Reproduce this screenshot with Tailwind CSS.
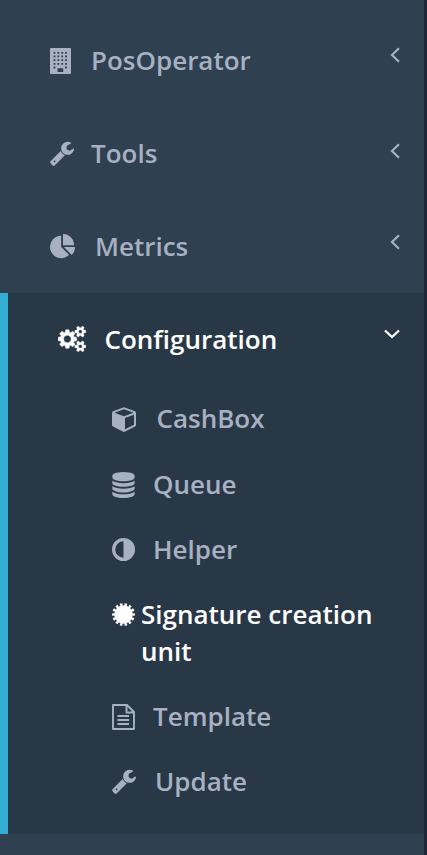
<!DOCTYPE html>
<html lang="en">
<head>
<meta charset="utf-8">
<title>Navigation</title>
<script src="https://cdn.jsdelivr.net/npm/@tailwindcss/browser@4"></script>
</head>
<body class="bg-[#2f4050]">
<nav class="w-[427px] h-[855px] overflow-hidden border-r-3 border-[#1d2735] bg-[#2f4050] pt-[14px] font-['Open_Sans',sans-serif] text-[26px] leading-[37px] font-semibold text-[#a7b1c2]">
  <ul>
    <li class="flex h-[93px] items-center pl-[50px] pr-[24px]">
      <svg class="w-[21px] h-[26px] shrink-0" viewBox="0 0 21 26" fill="currentColor"><path fill-rule="evenodd" d="M1 0H20Q21 0 21 1V25Q21 26 20 26H1Q0 26 0 25V1Q0 0 1 0ZM7.500 20.300V24H13.200V20.300Z"/><path d="M4.500 3.900V20.500M8.300 3.900V17M12.200 3.900V17M16 3.900V20.500" stroke="#2f4050" stroke-width="1.800" stroke-dasharray="1.800 1.870"/></svg>
      <span class="ml-[20px]">PosOperator</span>
      <svg class="ml-auto mb-3 w-[10px] h-[16px]" viewBox="0 0 10 16" fill="none" stroke="currentColor" stroke-width="2.200"><path d="M9 1.300L2 8L9 14.700"/></svg>
    </li>
    <li class="flex h-[93px] items-center pl-[49px] pr-[24px]">
      <svg class="mb-px w-[26px] h-[26px] shrink-0" viewBox="0 0 1792 1792" fill="currentColor"><path id="wrench" d="M448 1472q0-26-19-45t-45-19-45 19-19 45 19 45 45 19 45-19 19-45zm644-420l-682 682q-37 37-90 37-52 0-91-37l-106-108q-38-36-38-90 0-53 38-91l681-681q39 98 114.500 173.500t173.500 114.500zm634-435q0 39-23 106-47 134-164.500 217.500t-258.500 83.500q-185 0-316.500-131.500t-131.500-316.500 131.500-316.500 316.500-131.500q58 0 121.500 16.500t107.500 46.500q16 11 16 28t-16 28l-293 169v224l193 107q5-3 79-48.500t135.500-81 70.500-35.500q15 0 23.500 10t8.500 25z"/></svg>
      <span class="ml-[16px]">Tools</span>
      <svg class="ml-auto mb-1.5 w-[10px] h-[16px]" viewBox="0 0 10 16" fill="none" stroke="currentColor" stroke-width="2.200"><path d="M9 1.300L2 8L9 14.700"/></svg>
    </li>
    <li class="flex h-[93px] items-center pl-[50px] pr-[24px]">
      <svg class="w-[26px] h-[26px] shrink-0" viewBox="0 0 1792 1792" fill="currentColor"><path d="M768 890l546 546q-106 108-247.500 168t-298.500 60q-209 0-385.500-103t-279.500-279.500-103-385.500 103-385.500 279.500-279.500 385.500-103v762zm187 6h773q0 157-60 298.500t-168 247.500zm709-128h-768v-768q209 0 385.500 103t279.500 279.500 103 385.500z"/></svg>
      <span class="ml-[19px]">Metrics</span>
      <svg class="ml-auto mb-2.5 w-[10px] h-[16px]" viewBox="0 0 10 16" fill="none" stroke="currentColor" stroke-width="2.200"><path d="M9 1.300L2 8L9 14.700"/></svg>
    </li>
    <li class="h-[541px] border-l-8 border-[#33aed3] bg-[#293846]">
      <div class="flex h-[93px] items-center pl-[50px] pr-[24px] text-white">
        <svg class="mb-px w-[28px] h-[26px] shrink-0" viewBox="0 0 1920 1792" fill="currentColor" stroke="currentColor" stroke-width="30"><path d="M896 896q0-106-75-181t-181-75-181 75-75 181 75 181 181 75 181-75 75-181zm768 512q0-52-38-90t-90-38-90 38-38 90q0 53 37.500 90.500t90.500 37.500 90.500-37.500 37.500-90.500zm0-1024q0-52-38-90t-90-38-90 38-38 90q0 53 37.500 90.500t90.500 37.500 90.500-37.500 37.500-90.500zm-384 421v185q0 10-7 19.500t-16 10.500l-155 24q-11 35-32 76 34 48 90 115 7 11 7 20 0 12-7 19-23 30-82.500 89.500t-78.500 59.500q-11 0-21-7l-115-90q-37 19-77 31-11 108-23 155-7 24-30 24h-186q-11 0-20-7.500t-10-17.500l-23-153q-34-10-75-31l-118 89q-7 7-20 7-11 0-21-8-144-133-144-160 0-9 7-19 10-14 41-53t47-61q-23-44-35-82l-152-24q-10-1-17-9.500t-7-19.500v-185q0-10 7-19.500t16-10.500l155-24q11-35 32-76-34-48-90-115-7-11-7-20 0-12 7-20 22-30 82-89t79-59q11 0 21 7l115 90q34-18 77-32 11-108 23-154 7-24 30-24h186q11 0 20 7.500t10 17.500l23 153q34 10 75 31l118-89q8-7 20-7 11 0 21 8 144 133 144 160 0 8-7 19-12 16-42 54t-45 60q23 48 34 82l152 23q10 2 17 10.500t7 19.500zm640 533v140q0 16-149 31-12 27-30 52 51 113 51 138 0 4-4 7-122 71-124 71-8 0-46-47t-52-68q-20 2-30 2t-30-2q-14 21-52 68t-46 47q-2 0-124-71-4-3-4-7 0-25 51-138-18-25-30-52-149-15-149-31v-140q0-16 149-31 13-29 30-52-51-113-51-138 0-4 4-7 4-2 35-20t59-34 30-16q8 0 46 46.500t52 67.500q20-2 30-2t30 2q51-71 92-112l6-2q4 0 124 70 4 3 4 7 0 25-51 138 17 23 30 52 149 15 149 31zm0-1024v140q0 16-149 31-12 27-30 52 51 113 51 138 0 4-4 7-122 71-124 71-8 0-46-47t-52-68q-20 2-30 2t-30-2q-14 21-52 68t-46 47q-2 0-124-71-4-3-4-7 0-25 51-138-18-25-30-52-149-15-149-31v-140q0-16 149-31 13-29 30-52-51-113-51-138 0-4 4-7 4-2 35-20t59-34 30-16q8 0 46 46.500t52 67.500q20-2 30-2t30 2q51-71 92-112l6-2q4 0 124 70 4 3 4 7 0 25-51 138 17 23 30 52 149 15 149 31z"/></svg>
        <span class="ml-[18.500px]">Configuration</span>
        <svg class="ml-auto mb-3 w-[16px] h-[10px]" viewBox="0 0 16 10" fill="none" stroke="currentColor" stroke-width="2.200"><path d="M1 1.500L8 8L15 1.500"/></svg>
      </div>
      <ul class="pl-[104px]">
        <li class="flex h-[65px] items-center">
          <svg class="mt-px w-[24px] h-[25px] shrink-0" viewBox="0 0 24 25" fill="currentColor"><path fill-rule="evenodd" d="M12 .3L23 4.300Q24 4.800 24 6V18Q24 19 23 19.600L12.800 24.700Q12 25 11.200 24.700L1 19.600Q0 19 0 18V6Q0 4.800 1 4.300ZM12 2.300L2.600 5.700L12 9.200L21.400 5.700ZM13 22.200L22 17.800V7.700L13 11Z"/></svg>
          <span class="ml-[20.500px]">CashBox</span>
        </li>
        <li class="flex h-[66px] items-center">
          <svg class="mt-px w-[23px] h-[26px] shrink-0" viewBox="0 0 1536 1792" fill="currentColor"><path d="M768 768q237 0 443-43t325-127v170q0 69-103 128t-280 93.500-385 34.500-385-34.500-280-93.500-103-128v-170q119 84 325 127t443 43zm0 768q237 0 443-43t325-127v170q0 69-103 128t-280 93.500-385 34.500-385-34.500-280-93.500-103-128v-170q119 84 325 127t443 43zm0-384q237 0 443-43t325-127v170q0 69-103 128t-280 93.500-385 34.500-385-34.500-280-93.500-103-128v-170q119 84 325 127t443 43zm0-1152q208 0 385 34.500t280 93.500 103 128v128q0 69-103 128t-280 93.500-385 34.500-385-34.500-280-93.500-103-128v-128q0-69 103-128t280-93.500 385-34.500z"/></svg>
          <span class="ml-[18px]">Queue</span>
        </li>
        <li class="flex h-[65px] items-center">
          <svg class="w-[23px] h-[23px] shrink-0" viewBox="0 0 23 23"><circle cx="11.500" cy="11.500" r="9.900" fill="none" stroke="currentColor" stroke-width="3.200"/><path fill="currentColor" d="M11.500 2A9.500 9.500 0 0 1 11.500 21Z"/></svg>
          <span class="ml-[18px]">Helper</span>
        </li>
        <li class="flex h-[102px] pt-[14px] text-white">
          <svg class="mt-[7px] w-[23px] h-[23px] shrink-0" viewBox="0 0 23 23" fill="none" stroke="currentColor"><circle cx="11.500" cy="11.500" r="9.300" fill="currentColor" stroke="none"/><circle cx="11.500" cy="11.500" r="10" pathLength="28" stroke-width="2.800" stroke-dasharray="1.100 .9" stroke-dashoffset=".55"/></svg>
          <span class="ml-[6px] w-[240px]">Signature creation unit</span>
        </li>
        <li class="flex h-[65px] items-center">
          <svg class="w-[23px] h-[26px] shrink-0" viewBox="0 0 23 26" fill="none" stroke="currentColor" stroke-width="1.900"><path stroke-linejoin="round" d="M1 1H15L22 8V25H1ZM14.500 1V8.500H22"/><path d="M5.500 12H17M5.500 16H17M5.500 20H17"/></svg>
          <span class="ml-[18px]">Template</span>
        </li>
        <li class="flex h-[65px] items-center">
          <svg class="-ml-px mb-px w-[26px] h-[26px] shrink-0" viewBox="0 0 1792 1792" fill="currentColor"><use href="#wrench"/></svg>
          <span class="ml-[18px]">Update</span>
        </li>
      </ul>
    </li>
  </ul>
</nav>
</body>
</html>
